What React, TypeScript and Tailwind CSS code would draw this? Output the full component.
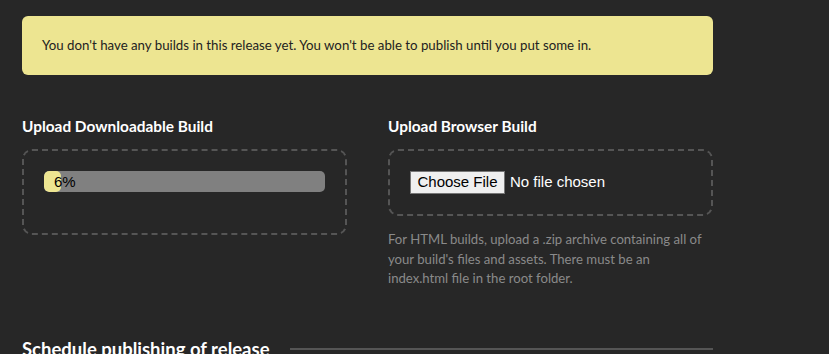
export default function App() {
  const progress = 6;

  return (
    <div className="min-h-screen bg-[#272727] px-[22px] pt-4 font-['Lato',sans-serif] text-white">
      <div className="w-[691px]">
        <div className="flex h-[59px] items-center rounded-md bg-[#ede591] px-5 text-[13.25px] text-[#222]">
          You don't have any builds in this release yet. You won't be able to publish until you put some in.
        </div>

        <div className="mt-[42px] grid grid-cols-[325px_325px] gap-x-[41px]">
          {/* downloadable */}
          <div>
            <h3 className="mb-[14px] text-[15.4px] leading-[18px] font-bold">
              Upload Downloadable Build
            </h3>
            <div className="h-[86px] rounded-[10px] border-2 border-dashed border-[#555] px-5 pt-5">
              <div className="relative h-[21px] overflow-hidden rounded-[5px] bg-[#808080]">
                <div className="h-full rounded-[5px] bg-[#ede591]" style={{ width: `${progress}%` }} />
                <span className="absolute top-0 left-[10px] font-['Liberation_Sans',sans-serif] text-[15px] leading-[21px] text-black">
                  {progress}%
                </span>
              </div>
            </div>
          </div>

          {/* browser */}
          <div>
            <h3 className="mb-[14px] text-[15.4px] leading-[18px] font-bold">
              Upload Browser Build
            </h3>
            <div className="h-[67px] rounded-[10px] border-2 border-dashed border-[#555] px-5 pt-5">
              <div className="flex items-center font-['Liberation_Sans',sans-serif] text-[15px]">
                <span className="flex h-[23px] w-[95px] items-center justify-center border border-[#767676] bg-[#efefef] text-black">
                  Choose File
                </span>
                <span className="ml-[5px]">No file chosen</span>
              </div>
            </div>
            <p className="mt-[14px] max-w-[318px] text-[13.15px] leading-[19.5px] text-[#8a8a8a]">
              For HTML builds, upload a .zip archive containing all of your build's files and assets. There must be an
              index.html file in the root folder.
            </p>
          </div>
        </div>

        <div className="mt-[48px] flex items-center gap-5">
          <h2 className="text-[18.5px] leading-[24px] font-bold">Schedule publishing of release</h2>
          <div className="h-[2px] flex-1 bg-[#555]" />
        </div>
      </div>
    </div>
  );
}
